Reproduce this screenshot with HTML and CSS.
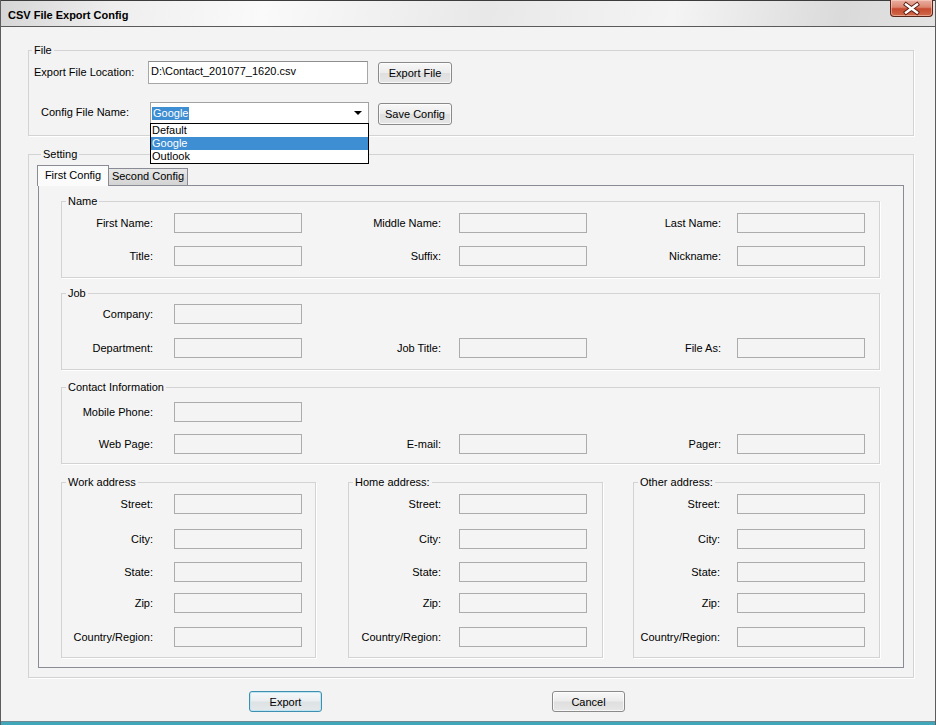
FILE: index.html
```html
<!DOCTYPE html>
<html>
<head>
<meta charset="utf-8">
<title>CSV File Export Config</title>
<link rel="stylesheet" href="styles.css">
</head>
<body>
<div class="window">
  <div class="titlebar">
    <span class="title">CSV File Export Config</span>
    <div class="close">
      <svg width="41" height="15" viewBox="0 0 41 15">
        <path d="M15 3.5 L26 11.5 M26 3.5 L15 11.5" stroke="#5a1a10" stroke-width="4.2" stroke-linecap="square" fill="none"/>
        <path d="M15 3.5 L26 11.5 M26 3.5 L15 11.5" stroke="#ffffff" stroke-width="2.4" stroke-linecap="square" fill="none"/>
      </svg>
    </div>
  </div>

  <div class="client">
    <fieldset class="group g-file">
      <legend>File</legend>
      <div class="frow">
        <span class="lbl-loc">Export File Location:</span>
        <div class="loc">D:\Contact_201077_1620.csv</div>
        <button class="btn btn-file">Export File</button>
      </div>
      <div class="frow frow2">
        <span class="lbl-cfg">Config File Name:</span>
        <div class="combo">
          <span class="sel">Google</span>
          <span class="arrow"></span>
          <ul class="dropdown">
            <li>Default</li>
            <li class="hl">Google</li>
            <li>Outlook</li>
          </ul>
        </div>
        <button class="btn btn-file btn-save">Save Config</button>
      </div>
    </fieldset>

    <fieldset class="group g-setting">
      <legend>Setting</legend>
      <div class="tabs">
        <div class="tab active">First Config</div>
        <div class="tab second">Second Config</div>
      </div>
      <div class="panel">
        <fieldset class="group inner g-name">
          <legend>Name</legend>
          <div class="row">
            <span class="lbl">First Name:</span><span class="tb"></span>
            <span class="lbl">Middle Name:</span><span class="tb"></span>
            <span class="lbl">Last Name:</span><span class="tb"></span>
          </div>
          <div class="row">
            <span class="lbl">Title:</span><span class="tb"></span>
            <span class="lbl">Suffix:</span><span class="tb"></span>
            <span class="lbl">Nickname:</span><span class="tb"></span>
          </div>
        </fieldset>

        <fieldset class="group inner g-job">
          <legend>Job</legend>
          <div class="row">
            <span class="lbl">Company:</span><span class="tb"></span>
          </div>
          <div class="row">
            <span class="lbl">Department:</span><span class="tb"></span>
            <span class="lbl">Job Title:</span><span class="tb"></span>
            <span class="lbl">File As:</span><span class="tb"></span>
          </div>
        </fieldset>

        <fieldset class="group inner g-contact">
          <legend>Contact Information</legend>
          <div class="row">
            <span class="lbl">Mobile Phone:</span><span class="tb"></span>
          </div>
          <div class="row">
            <span class="lbl">Web Page:</span><span class="tb"></span>
            <span class="lbl">E-mail:</span><span class="tb"></span>
            <span class="lbl">Pager:</span><span class="tb"></span>
          </div>
        </fieldset>

        <div class="addr-row">
          <fieldset class="group inner addr a-work">
            <legend>Work address</legend>
            <div class="arow"><span class="lbl">Street:</span><span class="tb"></span></div>
            <div class="arow"><span class="lbl">City:</span><span class="tb"></span></div>
            <div class="arow"><span class="lbl">State:</span><span class="tb"></span></div>
            <div class="arow"><span class="lbl">Zip:</span><span class="tb"></span></div>
            <div class="arow"><span class="lbl">Country/Region:</span><span class="tb"></span></div>
          </fieldset>
          <fieldset class="group inner addr a-home">
            <legend>Home address:</legend>
            <div class="arow"><span class="lbl">Street:</span><span class="tb"></span></div>
            <div class="arow"><span class="lbl">City:</span><span class="tb"></span></div>
            <div class="arow"><span class="lbl">State:</span><span class="tb"></span></div>
            <div class="arow"><span class="lbl">Zip:</span><span class="tb"></span></div>
            <div class="arow"><span class="lbl">Country/Region:</span><span class="tb"></span></div>
          </fieldset>
          <fieldset class="group inner addr a-other">
            <legend>Other address:</legend>
            <div class="arow"><span class="lbl">Street:</span><span class="tb"></span></div>
            <div class="arow"><span class="lbl">City:</span><span class="tb"></span></div>
            <div class="arow"><span class="lbl">State:</span><span class="tb"></span></div>
            <div class="arow"><span class="lbl">Zip:</span><span class="tb"></span></div>
            <div class="arow"><span class="lbl">Country/Region:</span><span class="tb"></span></div>
          </fieldset>
        </div>
      </div>
    </fieldset>

    <div class="footer">
      <button class="btn btn-foot btn-default">Export</button>
      <button class="btn btn-foot btn-cancel">Cancel</button>
    </div>
  </div>
  <div class="bottom-edge"></div>
</div>
</body>
</html>
```

FILE: styles.css
```css
* { box-sizing: border-box; }

body {
  margin: 0;
  font-family: "Liberation Sans", Arial, sans-serif;
  font-size: 11px;
  color: #000;
  background: #f3f3f3;
}

.window {
  width: 936px;
  height: 725px;
  border-left: 1px solid #5c5c5c;
  border-right: 1px solid #5c5c5c;
  display: flex;
  flex-direction: column;
  background: #f3f3f3;
}

/* title bar */
.titlebar {
  height: 27px;
  flex: none;
  border-bottom: 1px solid #5a5a5a;
  display: flex;
  justify-content: space-between;
  align-items: flex-start;
  background: linear-gradient(100deg, #d6d6d6 0%, #eeeeee 12%, #fafafa 28%, #e8e8e8 52%, #f4f4f4 72%, #dadada 90%, #e3e3e3 100%);
  box-shadow: inset 0 1px 0 #3c3c3c;
}

.title {
  font-weight: bold;
  line-height: 14px;
  margin: 8px 0 0 7px;
}

.close {
  width: 43px;
  height: 17px;
  margin-right: 2px;
  border: 1px solid #5b2418;
  border-top: none;
  border-radius: 0 0 4px 4px;
  background: linear-gradient(#eab0a2 0%, #dc8670 45%, #c64a30 55%, #d06a4a 100%);
  box-shadow: inset 0 0 0 1px rgba(255, 220, 210, 0.5);
  display: flex;
  align-items: center;
  justify-content: center;
}

.close svg { display: block; }

/* client area */
.client {
  flex: 1;
  padding: 16px 21px 0 27px;
}

fieldset.group {
  margin: 0;
  padding: 0;
  min-width: 0;
  border: 1px solid #d3d3d3;
  box-shadow: 1px 1px 0 #ffffff;
}

fieldset.group > legend {
  padding: 0 2px;
  margin-left: 3px;
  line-height: 14px;
}

fieldset.inner > legend { margin-left: 4px; }

/* file group */
.g-file { padding: 4px 0 10px 0 !important; }

.frow {
  display: flex;
  align-items: flex-start;
}

.frow2 { margin-top: 18px; }

.lbl-loc {
  width: 119px;
  padding-left: 5px;
  line-height: 22px;
}

.lbl-cfg {
  width: 121px;
  padding-left: 12px;
  line-height: 21px;
}

.loc {
  width: 220px;
  height: 23px;
  border: 1px solid #a7a7a7;
  border-top-color: #8e8e8e;
  background: #ffffff;
  padding: 2px 0 0 2px;
  line-height: 14px;
}

.combo {
  position: relative;
  width: 219px;
  height: 22px;
  border: 1px solid #a2a2a2;
  background: #ffffff;
  display: flex;
  align-items: center;
  justify-content: space-between;
  padding: 0 6px 0 1px;
}

.sel {
  background: #3d8ed2;
  color: #ffffff;
  line-height: 13px;
  padding: 0 1px;
}

.arrow {
  width: 0;
  height: 0;
  border-left: 4px solid transparent;
  border-right: 4px solid transparent;
  border-top: 4px solid #000;
}

.dropdown {
  position: absolute;
  left: -1px;
  top: 100%;
  width: 219px;
  margin: 0;
  padding: 0;
  list-style: none;
  background: #ffffff;
  border: 1px solid #000;
  z-index: 10;
}

.dropdown li {
  height: 13px;
  line-height: 13px;
  padding-left: 1px;
}

.dropdown li.hl {
  background: #3d8ed2;
  color: #ffffff;
}

/* buttons */
.btn {
  font-family: "Liberation Sans", Arial, sans-serif;
  font-size: 11px;
  color: #000;
  padding: 0;
  margin: 0;
  border: 1px solid #8a8a8a;
  border-radius: 3px;
  background: linear-gradient(#f8f8f8 0%, #ececec 48%, #dfdfdf 52%, #e6e6e6 100%);
  box-shadow: inset 0 0 0 1px rgba(255, 255, 255, 0.7);
}

.btn-file {
  width: 74px;
  height: 22px;
  margin: 1px 0 0 10px;
}

.btn-save { margin-left: 9px; }

/* setting group */
.g-setting {
  margin-top: 11px !important;
  padding: 4px 9px 9px 9px !important;
}

.tabs {
  display: flex;
  align-items: flex-end;
  height: 20px;
  margin-left: -1px;
}

.tab {
  border: 1px solid #898c95;
  border-bottom: none;
  text-align: center;
}

.tab.active {
  position: relative;
  z-index: 1;
  width: 72px;
  height: 21px;
  margin-bottom: -1px;
  background: #fbfbfb;
  line-height: 19px;
}

.tab.second {
  width: 79px;
  height: 17px;
  border-left: none;
  background: linear-gradient(#e8e8e8, #d3d3d3);
  line-height: 15px;
}

.panel {
  border: 1px solid #898c95;
  background: #f4f4f4;
  padding: 8px 23px 9px 22px;
}

/* field rows */
.row {
  display: grid;
  grid-template-columns: 112px 128px 157px 128px 150px 128px;
  align-items: center;
}

.lbl {
  text-align: right;
  line-height: 20px;
  white-space: nowrap;
}

.row > .lbl:nth-child(1) { padding-right: 21px; }
.row > .lbl:nth-child(3) { padding-right: 18px; }
.row > .lbl:nth-child(5) { padding-right: 16px; }

.tb {
  display: block;
  height: 20px;
  border: 1px solid #acacac;
  background: #f4f4f4;
}

.g-name { padding: 5px 0 11px 0 !important; }
.g-name .row + .row { margin-top: 13px; }

.g-job { margin-top: 8px !important; padding: 4px 0 11px 0 !important; }
.g-job .row + .row { margin-top: 14px; }

.g-contact { margin-top: 10px !important; padding: 8px 0 9px 0 !important; }
.g-contact .row + .row { margin-top: 12px; }

/* address groups */
.addr-row {
  display: flex;
  align-items: flex-start;
  margin-top: 11px;
}

.addr { padding: 5px 0 10px 0 !important; }

.a-work { width: 255px; }
.a-home { width: 255px; margin-left: 32px !important; }
.a-other { width: 247px; margin-left: 30px !important; }

.arow {
  display: grid;
  align-items: center;
}

.a-work .arow { grid-template-columns: 112px 128px; }
.a-work .lbl { padding-right: 21px; }
.a-home .arow { grid-template-columns: 110px 128px; }
.a-home .lbl { padding-right: 18px; }
.a-other .arow { grid-template-columns: 103px 128px; }
.a-other .lbl { padding-right: 17px; }

.addr .arow:nth-of-type(2) { margin-top: 15px; }
.addr .arow:nth-of-type(3) { margin-top: 13px; }
.addr .arow:nth-of-type(4) { margin-top: 11px; }
.addr .arow:nth-of-type(5) { margin-top: 14px; }

/* footer */
.footer {
  display: flex;
  padding: 13px 0 0 221px;
}

.btn-foot {
  width: 73px;
  height: 21px;
}

.btn-default {
  border-color: #3f8fb0;
  box-shadow: inset 0 0 0 1px #bfe4f2;
  background: linear-gradient(#f6f9fa 0%, #eaeef0 48%, #dde2e4 52%, #e4e8ea 100%);
}

.btn-cancel { margin-left: 230px; }

.bottom-edge {
  flex: none;
  height: 4px;
  border-top: 1px solid #6f8a90;
  background: #40a6ba;
}
```
